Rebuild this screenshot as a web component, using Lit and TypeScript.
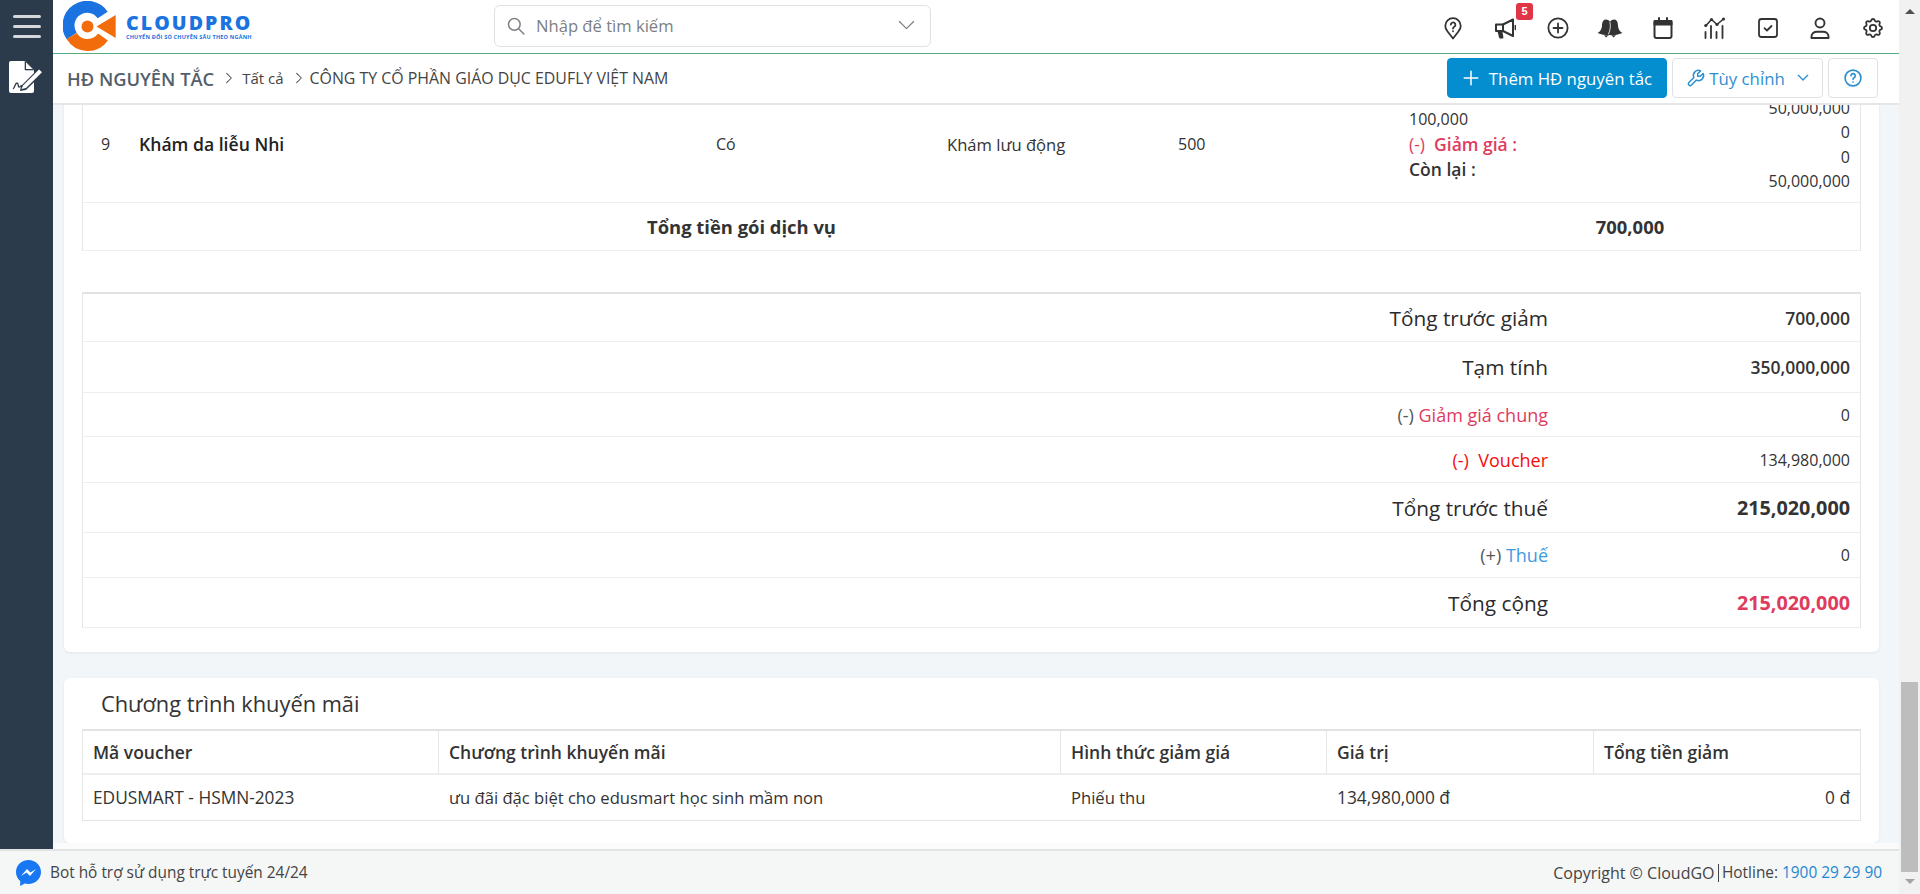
import { LitElement, html, css, svg } from "lit";
import { customElement } from "lit/decorators.js";

const I = (body: unknown, size = 24, vb = "0 0 24 24") => html`<svg class="ic" width=${size} height=${size} viewBox=${vb} fill="none" stroke="currentColor" stroke-width="1.8" stroke-linecap="round" stroke-linejoin="round">${body}</svg>`;

const topIcons = [
  svg`<path d="M12 22.500 6.400 15.200A7.700 7.700 0 1 1 17.600 15.200Z"/><path d="M9.800 8.600a2.300 2.300 0 1 1 3.400 2.200c-.8.500-1.200 1-1.200 1.800"/><path d="M12 15.200v.1"/>`,
  svg`<path d="M20 3.500 10 8.500H3v6.500h7l10 5Z" stroke-width="2"/><path d="M10 8.500v6.500" stroke-width="2"/><path d="M5.500 15.500l1.500 6h2.500L8.500 15.500Z" stroke-width="1.800" fill="currentColor"/><path d="M22.300 9.500v4" stroke-width="1.400"/>`,
  svg`<circle cx="12" cy="12" r="9.600"/><path d="M12 7.500v9M7.500 12h9"/>`,
  svg`<g fill="currentColor" stroke="none"><path d="M7.500 3.500C10 3.500 11.500 4.500 12 6c.5-1.500 2-2.500 4.500-2.500 3 .5 3.500 4 3.500 6.500.2 2.500 1.500 5.500 4.500 7-5.500 2-9.500 2.500-12.500 2-3 .5-7 0-12.500-2 3-1.500 4.300-4.500 4.500-7 0-2.500.5-6 3.500-6.500Z"/><path d="M6 19.300h4.500L8 21.500Z"/><path d="M13.500 19.300H18l-2.500 2.200Z"/><path d="M12 6.500c.8 3.500.4 7.500-1.500 11.500" fill="none" stroke="#fff" stroke-width=".8"/></g>`,
  svg`<rect x="3.500" y="5" width="17" height="17" rx="2" stroke-width="2"/><path d="M3.500 5h17v3.500h-17Z" fill="currentColor" stroke-width="2"/><path d="M8 2v3M16 2v3" stroke-width="2"/>`,
  svg`<path d="M3 9.500 8.500 3.500 14 8.500 20.500 3" stroke-width="1.600"/><g fill="currentColor" stroke="none"><circle cx="2.800" cy="9.500" r="1.600"/><circle cx="8.500" cy="3.500" r="1.600"/><circle cx="14" cy="8.500" r="1.600"/><circle cx="20.500" cy="3" r="1.600"/></g><path d="M2.500 16v6M8 10v12M13.500 16v6M19.500 10v12" stroke-width="1.800"/>`,
  svg`<rect x="3" y="3" width="18" height="18" rx="2.500"/><path d="M8.500 12.200 11 14.500l4.500-4.500"/>`,
  svg`<circle cx="12" cy="7" r="4.500" stroke-width="1.900"/><path d="M3.500 22v-1.500c0-3 2.500-4.800 5.500-4.800h6c3 0 5.500 1.800 5.500 4.800V22Z" stroke-width="1.900"/>`,
  svg`<path d="M10.325 4.317c.426-1.756 2.924-1.756 3.35 0a1.724 1.724 0 0 0 2.573 1.066c1.543-.94 3.31.826 2.37 2.37a1.724 1.724 0 0 0 1.065 2.572c1.756.426 1.756 2.924 0 3.35a1.724 1.724 0 0 0-1.066 2.573c.94 1.543-.826 3.31-2.37 2.37a1.724 1.724 0 0 0-2.572 1.065c-.426 1.756-2.924 1.756-3.35 0a1.724 1.724 0 0 0-2.573-1.066c-1.543.94-3.31-.826-2.37-2.37a1.724 1.724 0 0 0-1.065-2.572c-1.756-.426-1.756-2.924 0-3.35a1.724 1.724 0 0 0 1.066-2.573c-.94-1.543.826-3.31 2.37-2.37 1 .608 2.296.07 2.572-1.065z"/><circle cx="12" cy="12" r="3.200"/>`,
];

const summary = [
  { cls: "h48 lg", label: html`Tổng trước giảm`, val: "700,000", vcls: "v-md" },
  { cls: "h51 lg", label: html`Tạm tính`, val: "350,000,000", vcls: "v-md" },
  { cls: "h44 md", label: html`<span class="muted">(-)</span> <span class="pink">Giảm giá chung</span>`, val: "0", vcls: "" },
  { cls: "h46 md", label: html`<span class="red">(-)&nbsp; Voucher</span>`, val: "134,980,000", vcls: "" },
  { cls: "h50 lg", label: html`Tổng trước thuế`, val: "215,020,000", vcls: "v-lg" },
  { cls: "h45 md", label: html`<span class="muted">(+)</span> <span class="blue">Thuế</span>`, val: "0", vcls: "" },
  { cls: "h50 lg", label: html`Tổng cộng`, val: "215,020,000", vcls: "v-lg pinktxt" },
];

@customElement("app-root")
export class AppRoot extends LitElement {
  static styles = css`
    :host { display: flex; width: 1920px; height: 894px; overflow: hidden; font-family: "Open Sans", sans-serif; font-size: 16px; color: #333; background: #fff; }
    * { box-sizing: border-box; }
    .ic { display: block; flex: none; overflow: visible; }
    .frame { width: 1899px; display: flex; flex-direction: column; }
    .upper { height: 849px; display: flex; }
    .side { width: 53px; background: #2c3b4c; display: flex; flex-direction: column; align-items: center; padding-top: 15px; flex: none; }
    .burger { width: 28px; display: flex; flex-direction: column; gap: 7px; }
    .burger i { display: block; height: 3px; border-radius: 2px; background: #d5d7da; }
    .docic { margin-top: 23px; }
    .col { width: 1846px; display: flex; flex-direction: column; min-height: 0; }
    .head { height: 54px; border-bottom: 1px solid #54ab80; display: flex; align-items: center; flex: none; background: #fff; }
    .logo { margin-left: 10px; width: 54px; height: 52px; flex: none; }
    .brand { margin-left: 9px; width: 130px; display: flex; flex-direction: column; color: #1a73e0; }
    .brand b { font: 800 19.500px/21px "Open Sans", sans-serif; letter-spacing: 2.100px; white-space: nowrap; }
    .brand small { font: 700 5.500px/9px "Open Sans", sans-serif; letter-spacing: .2px; white-space: nowrap; }
    .search { margin-left: 238px; margin-bottom: 2px; width: 437px; height: 42px; border: 1px solid #dfe1e4; border-radius: 6px; display: flex; align-items: center; padding: 0 14px 0 11px; color: #7b7f84; gap: 10px; }
    .search span { flex: 1; font-size: 16.600px; }
    .icons { margin-left: auto; display: flex; align-items: center; margin-right: 14.500px; margin-top: 3px; gap: 28.500px; color: #333; }
    .icwrap { position: relative; }
    .badge { position: absolute; top: -13px; left: 23px; width: 17px; height: 17px; border-radius: 3px; background: #e03546; color: #fff; font: 700 11px/17px "Liberation Sans", sans-serif; text-align: center; }
    .sub { height: 51px; border-bottom: 2px solid #e6e6e6; display: flex; align-items: center; padding-left: 14px; flex: none; background: #fff; padding-right: 21px; padding-bottom: 1px; }
    .crumb1 { font-weight: 600; font-size: 18.300px; color: #53606c; }
    .crumb2 { font-size: 15px; color: #444; }
    .crumb3 { font-size: 15.900px; color: #444; }
    .chev { color: #555; margin: 0 6px 0 8px; }
    .chev.two { margin-right: 4px; }
    .actions { margin-left: auto; display: flex; gap: 5px; }
    .btn { height: 40px; border-radius: 4px; display: flex; align-items: center; justify-content: center; font-size: 16.800px; border: 1px solid #dfe1e4; color: #2e8fd0; background: #fff; }
    .btn.pri { width: 220px; background: #048ed0; border-color: #048ed0; color: #fff; gap: 9px; }
    .btn.cus { width: 151px; gap: 3px; padding-left: 2px; }
    .btn.help { width: 50px; }
    .gapsm { width: 4px; }
    .scroll { flex: 1; min-height: 0; overflow: hidden; display: flex; flex-direction: column; justify-content: flex-end; background: #f3f6f9; padding: 0 20px 0 11px; }
    .card { background: #fff; border-radius: 6px; box-shadow: 0 1px 3px rgba(0,0,0,.07); flex: none; width: 1815px; }
    .c1 { padding: 0 18px 24px; }
    .c2 { margin-top: 26px; padding: 0 18px 22px; }
    .strip { height: 6px; background: #fbfbfb; margin: 0 -20px 0 -11px; flex: none; }
    .grid { display: grid; grid-template-columns: 47px 577px 231px 231px 231px 231px 229px; width: 1779px; border-left: 1px solid #e6e6e6; border-right: 1px solid #e6e6e6; }
    .grid > div { border-bottom: 1px solid #eee; }
    .rowc { height: 116px; display: flex; align-items: center; padding-left: 9px; padding-bottom: 1px; }
    .rowc.first { padding-left: 18px; }
    .wide { font-size: 16.600px; }
    .name { font-weight: 600; color: #222; font-size: 17.600px; }
    .lines { display: flex; flex-direction: column; line-height: 25px; }
    .semi { font-weight: 600; font-size: 17.500px; }
    .reg { font-weight: 400; font-size: 17.500px; }
    .vals { display: flex; flex-direction: column; align-items: flex-end; justify-content: center; line-height: 24.400px; padding-right: 10px; height: 116px; }
    .tot { grid-column: span 5; height: 48px; display: flex; align-items: center; justify-content: center; font-weight: 700; font-size: 18.400px; }
    .totv { grid-column: span 2; height: 48px; display: flex; align-items: center; justify-content: center; font-weight: 700; font-size: 18.400px; }
    .sum { margin-top: 41px; width: 1779px; border: 1px solid #e6e6e6; border-top: 2px solid #e2e2e2; border-bottom: none; }
    .sr { display: flex; align-items: center; justify-content: flex-end; border-bottom: 1px solid #eee; padding-right: 10px; }
    .sr .lab { text-align: right; }
    .sr .val { width: 302px; text-align: right; }
    .h48 { height: 48px; } .h51 { height: 51px; } .h50 { height: 50px; } .h44 { height: 44px; } .h45 { height: 45px; } .h46 { height: 46px; }
    .lg .lab { font-size: 20.800px; font-weight: 500; color: #2b2b2b; }
    .md .lab { font-size: 18px; }
    .v-md { font-size: 17.500px; font-weight: 600; }
    .v-lg { font-size: 19.800px; font-weight: 700; }
    .pinktxt { color: #df3b5e; }
    .pink { color: #df3b5e; }
    .red { color: #f40d0d; font-weight: 500; }
    .blue { color: #3f9ade; }
    .muted { color: #555; font-size: 18px; }
    .ptitle { height: 51px; display: flex; align-items: center; padding-left: 19px; font-size: 21.800px; color: #333; padding-bottom: 1px; }
    .vt { width: 1779px; border: 1px solid #e6e6e6; border-top: 2px solid #e2e2e2; display: grid; grid-template-columns: 356px 622px 266px 267px 266px; }
    .vt > div { padding: 0 10px; display: flex; align-items: center; }
    .vh { height: 44px; font-weight: 600; font-size: 17.500px; border-right: 1px solid #e6e6e6; border-bottom: 2px solid #eee; color: #333; }
    .vh:nth-child(5) { border-right: none; }
    .vd { height: 45px; font-size: 17.300px; }
    .vd.tight { font-size: 16.600px; }
    .right { justify-content: flex-end; }
    .foot { height: 45px; border-top: 2px solid #e2e4e4; background: #f5f6f6; display: flex; align-items: center; padding: 0 17px 0 16px; font-size: 15.400px; color: #444; flex: none; }
    .foot .l { margin-left: 9px; }
    .foot .r { margin-left: auto; display: flex; align-items: center; white-space: pre; }
    .foot .copy { font-size: 16px; }
    .foot .bar { width: 1.500px; height: 18px; background: #444; margin: 0 3px; }
    .foot a { color: #1e88d0; }
    .sb { width: 21px; background: #f1f1f1; flex: none; display: flex; flex-direction: column; align-items: center; height: 894px; }
    .tri { width: 0; height: 0; border-left: 5px solid transparent; border-right: 5px solid transparent; flex: none; }
    .tri.up { border-bottom: 5px solid #505050; margin-top: 9px; }
    .thumb { margin-top: 668px; width: 17px; height: 190px; background: #bdbdbd; flex: none; }
    .tri.dn { border-top: 5px solid #a3a3a3; margin-top: 7px; }
  `;

  render() {
    return html`
      <div class="frame">
        <div class="upper">
          <aside class="side">
            <div class="burger"><i></i><i></i><i></i></div>
            <svg class="docic" width="36" height="32" viewBox="0 0 36 32">
              <path d="M2 0h14l9 9v21a2 2 0 0 1-2 2H2a2 2 0 0 1-2-2V2a2 2 0 0 1 2-2Z" fill="#fff"/>
              <path d="M16 0v9h9" fill="#2c3b4c" stroke="#2c3b4c" stroke-width=".6"/>
              <path d="M17 1.500v6.500h6.500Z" fill="#fff"/>
              <path d="M12 25 30 7l5 4.500L17 29l-6 1Z" fill="#2c3b4c"/>
              <path d="M14 24.500 30 8.500l3 2.800L17 27l-4.500 1Z" fill="#fff"/>
              <path d="M4 28c2-1 2-6 4-6s.5 5 2.500 4 1-2 3-1" fill="none" stroke="#2c3b4c" stroke-width="1.300"/>
            </svg>
          </aside>
          <div class="col">
            <header class="head">
              <svg class="logo" viewBox="0 0 54 52" fill="none">
                <path d="M39.700 14A18.700 18.700 0 0 0 8.700 35" stroke="#1a73e0" stroke-width="12"/>
                <path d="M8.700 35A18.700 18.700 0 0 0 40 36" stroke="#f36c0c" stroke-width="12"/>
                <circle cx="24.500" cy="25.500" r="6" fill="#f36c0c"/>
                <path d="M33.500 25.500 52.700 14v23Z" fill="#f36c0c"/>
              </svg>
              <div class="brand"><b>CLOUDPRO</b><small>CHUYỂN ĐỔI SỐ CHUYÊN SÂU THEO NGÀNH</small></div>
              <div class="search">
                ${I(svg`<circle cx="10" cy="10" r="7"/><path d="m15.500 15.500 6 6"/>`, 20)}
                <span>Nhập để tìm kiếm</span>
                ${I(svg`<path d="m3 7 9 9 9-9" stroke-width="1.500"/>`, 19)}
              </div>
              <div class="icons">
                ${topIcons.map((b, i) => html`<div class="icwrap">${I(b)}${i === 1 ? html`<span class="badge">5</span>` : ""}</div>`)}
              </div>
            </header>
            <div class="sub">
              <span class="crumb1">HĐ NGUYÊN TẮC</span>
              <span class="chev">${I(svg`<path d="m8 4 8 8-8 8"/>`, 14)}</span>
              <span class="crumb2">Tất cả</span>
              <span class="chev two">${I(svg`<path d="m8 4 8 8-8 8"/>`, 14)}</span>
              <span class="crumb3">CÔNG TY CỔ PHẦN GIÁO DỤC EDUFLY VIỆT NAM</span>
              <div class="actions">
                <div class="btn pri">${I(svg`<path d="M12 3v18M3 12h18" stroke-width="2"/>`, 18)}Thêm HĐ nguyên tắc</div>
                <div class="btn cus">${I(svg`<path d="M17 10h-3V7l3.500-3.500a6 6 0 0 0-8 8l-6 6a2 2 0 0 0 3 3l6-6a6 6 0 0 0 8-8L17 10" />`, 20)}Tùy chỉnh<span class="gapsm"></span>${I(svg`<path d="m5 8 7 7 7-7" stroke-width="2"/>`, 16)}</div>
                <div class="btn help">${I(svg`<circle cx="12" cy="12" r="9.500" stroke-width="2"/><path d="M9.500 9.300a2.600 2.600 0 1 1 3.800 2.300c-.9.500-1.300 1-1.300 2" stroke-width="2"/><path d="M12 16.800v.1" stroke-width="2"/>`, 20)}</div>
              </div>
            </div>
            <main class="scroll">
              <section class="card c1">
                <div class="grid">
                  <div class="rowc first">9</div>
                  <div class="rowc name">Khám da liễu Nhi</div>
                  <div class="rowc">Có</div>
                  <div class="rowc wide">Khám lưu động</div>
                  <div class="rowc">500</div>
                  <div class="rowc"><div class="lines">
                    <span>100,000</span>
                    <span class="pink semi"><span class="reg">(-)</span>&nbsp; Giảm giá :</span>
                    <span class="semi">Còn lại :</span>
                  </div></div>
                  <div class="vals"><span>50,000,000</span><span>0</span><span>0</span><span>50,000,000</span></div>
                  <div class="tot">Tổng tiền gói dịch vụ</div>
                  <div class="totv">700,000</div>
                </div>
                <div class="sum">
                  ${summary.map(r => html`<div class="sr ${r.cls}"><div class="lab">${r.label}</div><div class="val ${r.vcls}">${r.val}</div></div>`)}
                </div>
              </section>
              <section class="card c2">
                <div class="ptitle">Chương trình khuyến mãi</div>
                <div class="vt">
                  <div class="vh">Mã voucher</div>
                  <div class="vh">Chương trình khuyến mãi</div>
                  <div class="vh">Hình thức giảm giá</div>
                  <div class="vh">Giá trị</div>
                  <div class="vh">Tổng tiền giảm</div>
                  <div class="vd">EDUSMART - HSMN-2023</div>
                  <div class="vd tight">ưu đãi đặc biệt cho edusmart học sinh mầm non</div>
                  <div class="vd tight">Phiếu thu</div>
                  <div class="vd">134,980,000 đ</div>
                  <div class="vd right">0 đ</div>
                </div>
              </section>
              <div class="strip"></div>
            </main>
          </div>
        </div>
        <footer class="foot">
          <svg width="25" height="26" viewBox="0 0 25 26">
            <path d="M12.500 0C5.600 0 0 5.200 0 12c0 3.700 1.600 6.800 4.200 9v5l4.500-2.500c1.200.3 2.500.5 3.800.5C19.400 24 25 18.800 25 12S19.400 0 12.500 0Z" fill="#1877f2"/>
            <path d="m5 16 6-7 3.500 3.500L20 9l-6 7-3.500-3.500Z" fill="#fff"/>
          </svg>
          <span class="l">Bot hỗ trợ sử dụng trực tuyến 24/24</span>
          <span class="r"><span class="copy">Copyright © CloudGO</span><i class="bar"></i><span>Hotline: </span><a>1900 29 29 90</a></span>
        </footer>
      </div>
      <div class="sb">
        <div class="tri up"></div>
        <div class="thumb"></div>
        <div class="tri dn"></div>
      </div>
    `;
  }
}
